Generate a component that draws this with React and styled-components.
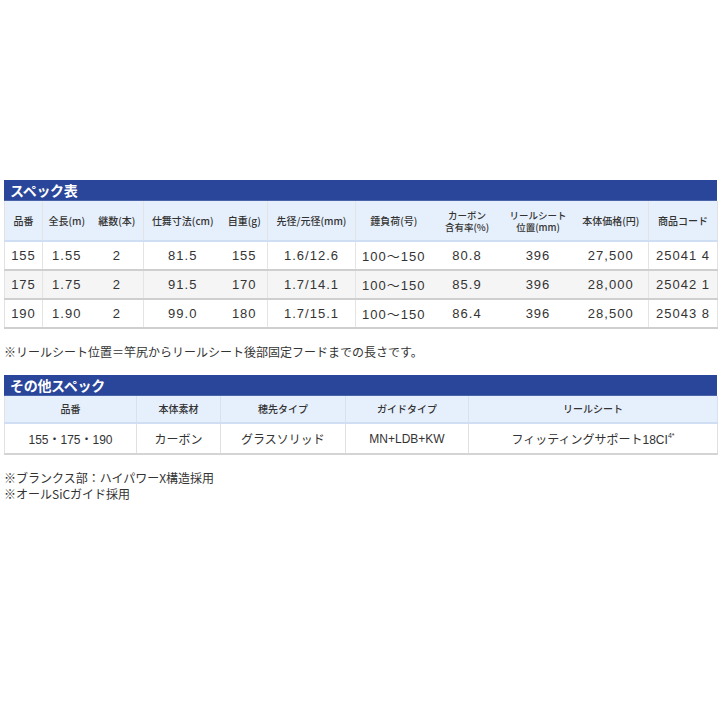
import { createGlobalStyle, styled } from 'styled-components';

const GlobalStyle = createGlobalStyle`
  body {
    margin: 0;
    background: #fff;
    font-family: 'Liberation Sans', 'Noto Sans CJK JP', sans-serif;
    color: #333;
  }
`;

const specHead = [
  '品番',
  '全長(m)',
  '継数(本)',
  '仕舞寸法(cm)',
  '自重(g)',
  '先径/元径(mm)',
  '錘負荷(号)',
  ['カーボン', '含有率(%)'],
  ['リールシート', '位置(mm)'],
  '本体価格(円)',
  '商品コード'
];

const specWidths = [38, 48, 53, 78, 46, 88, 76, 71, 71, 75, 69];

const specRows = [
  ['155', '1.55', '2', '81.5', '155', '1.6/12.6', '100〜150', '80.8', '396', '27,500', '25041 4'],
  ['175', '1.75', '2', '91.5', '170', '1.7/14.1', '100〜150', '85.9', '396', '28,000', '25042 1'],
  ['190', '1.90', '2', '99.0', '180', '1.7/15.1', '100〜150', '86.4', '396', '28,500', '25043 8']
];

const otherHead = ['品番', '本体素材', '穂先タイプ', 'ガイドタイプ', 'リールシート'];
const otherWidths = [132, 84, 125, 123, 249];

function App() {
  return (
    <Page>
      <GlobalStyle />
      <Section>
        <TitleBar>スペック表</TitleBar>
        <Table>
          <colgroup>
            {specWidths.map((w, i) => (
              <col key={i} style={{ width: w }} />
            ))}
          </colgroup>
          <thead>
            <tr>
              {specHead.map((h, i) => (
                <HeadCell key={i} $tall>
                  {Array.isArray(h) ? (
                    <>
                      <HeadLine>{h[0]}</HeadLine>
                      <HeadLine>{h[1]}</HeadLine>
                    </>
                  ) : (
                    h
                  )}
                </HeadCell>
              ))}
            </tr>
          </thead>
          <tbody>
            {specRows.map((row, r) => (
              <SpecRow key={r} $shade={r === 1}>
                {row.map((v, i) => (
                  <DataCell key={i}>{v}</DataCell>
                ))}
              </SpecRow>
            ))}
          </tbody>
        </Table>
      </Section>

      <Note $top={15}>※リールシート位置＝竿尻からリールシート後部固定フードまでの長さです。</Note>

      <Section $top={15}>
        <TitleBar>その他スペック</TitleBar>
        <Table $all>
          <colgroup>
            {otherWidths.map((w, i) => (
              <col key={i} style={{ width: w }} />
            ))}
          </colgroup>
          <thead>
            <tr>
              {otherHead.map((h) => (
                <HeadCell key={h}>{h}</HeadCell>
              ))}
            </tr>
          </thead>
          <tbody>
            <OtherRow>
              <DataCell $compact>155・175・190</DataCell>
              <DataCell $compact>カーボン</DataCell>
              <DataCell $compact>グラスソリッド</DataCell>
              <DataCell $compact>MN+LDB+KW</DataCell>
              <DataCell $compact>
                フィッティングサポート18CI<Sup>4*</Sup>
              </DataCell>
            </OtherRow>
          </tbody>
        </Table>
      </Section>

      <NoteList>
        <Note>※ブランクス部：ハイパワーX構造採用</Note>
        <Note>※オールSiCガイド採用</Note>
      </NoteList>
    </Page>
  );
}

export default App;

const Page = styled.div`
  width: 713px;
  padding: 180px 3px 0 4px;
  display: flex;
  flex-direction: column;
`;

const Section = styled.div`
  display: flex;
  flex-direction: column;
  margin-top: ${(p) => p.$top || 0}px;
`;

const TitleBar = styled.div`
  box-sizing: border-box;
  height: 21px;
  padding-left: 6px;
  background: #29469a;
  border-bottom: 1px solid #4a64aa;
  color: #fff;
  font-family: 'Noto Sans CJK JP', sans-serif;
  font-weight: 700;
  font-size: 14px;
  line-height: 20px;
  letter-spacing: -0.3px;
`;

const Table = styled.table`
  width: 713px;
  table-layout: fixed;
  border-collapse: collapse;
  border-left: 1px solid #e2e2e2;
  border-right: 1px solid #e2e2e2;

  th {
    border-right: ${(p) => (p.$all ? '1px solid #d6e2f2' : 'none')};
  }
  td {
    border-right: ${(p) => (p.$all ? '1px solid #e0e0e0' : 'none')};
  }
  ${(p) =>
    !p.$all &&
    `
    th:nth-child(1), th:nth-child(3), th:nth-child(5), th:nth-child(6), th:nth-child(10),
    td:nth-child(1), td:nth-child(3), td:nth-child(5), td:nth-child(6), td:nth-child(10) {
      border-right: 1px solid #e4e4e4;
    }
  `}
`;

const HeadCell = styled.th`
  box-sizing: border-box;
  height: ${(p) => (p.$tall ? 40 : 27)}px;
  padding: 0;
  background: #e6f0fc;
  border-bottom: 2px solid #cfdef2;
  font-family: 'Noto Sans CJK JP', sans-serif;
  font-size: 10px;
  line-height: 12px;
  font-weight: 500;
  color: #333;
  text-align: center;
  vertical-align: middle;
  white-space: nowrap;
`;

const HeadLine = styled.div`
  height: 12px;
  line-height: 12px;
  font-size: 9.5px;
  overflow: visible;
`;

const SpecRow = styled.tr`
  height: 29px;
  background: ${(p) => (p.$shade ? '#f5f5f5' : '#fff')};
  border-bottom: 2px solid #cfcfcf;
`;

const OtherRow = styled.tr`
  height: 31px;
  background: #fff;
  border-bottom: 2px solid #d4d4d4;
`;

const DataCell = styled.td`
  padding: 0;
  text-align: center;
  vertical-align: middle;
  font-family: 'Liberation Sans', 'Noto Sans CJK JP', sans-serif;
  font-size: ${(p) => (p.$compact ? 12 : 13)}px;
  letter-spacing: ${(p) => (p.$compact ? 0 : 1)}px;
  color: #333;
  white-space: nowrap;
`;

const Sup = styled.sup`
  font-size: 7px;
  letter-spacing: 0;
  vertical-align: 6px;
`;

const Note = styled.div`
  margin-top: ${(p) => p.$top || 0}px;
  font-family: 'Noto Sans CJK JP', sans-serif;
  font-size: 12px;
  line-height: 16px;
  color: #333;
`;

const NoteList = styled.div`
  display: flex;
  flex-direction: column;
  margin-top: 15px;
`;
